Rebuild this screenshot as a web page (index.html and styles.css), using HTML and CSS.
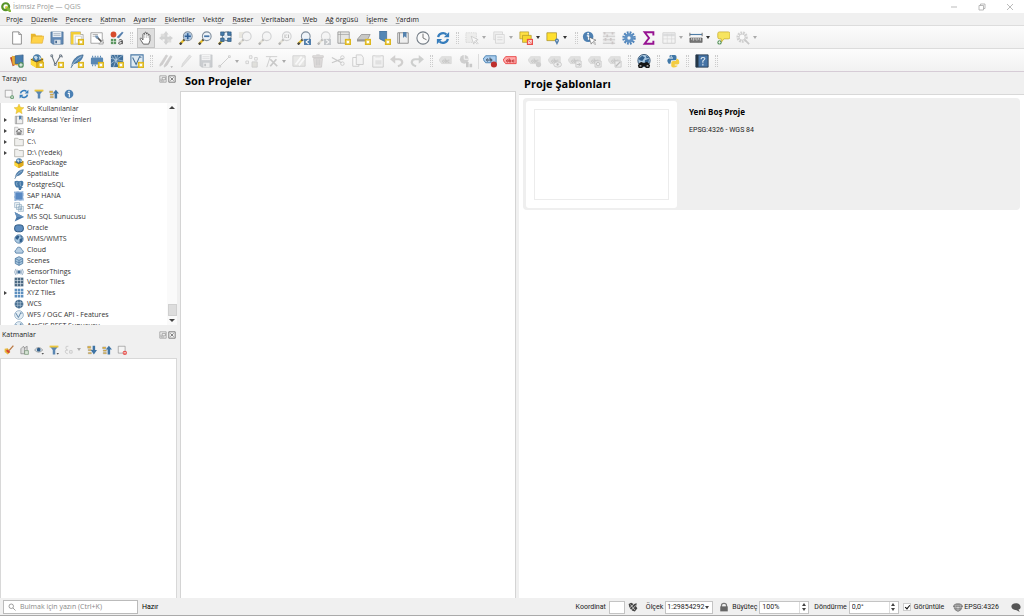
FILE: index.html
```html
<!DOCTYPE html>
<html lang="tr">
<head>
<meta charset="utf-8">
<title>İsimsiz Proje — QGIS</title>
<link rel="stylesheet" href="styles.css">
</head>
<body>
<svg class="sprite" aria-hidden="true">
  <symbol id="new" viewBox="0 0 16 16"><path d="M9 9h7v7H9z" fill="#dcb51c"/><path d="M12.500 10v5M10 12.500h5M10.800 10.800l3.400 3.400M14.200 10.800l-3.400 3.400" stroke="#fff6b8" stroke-width=".9"/><circle cx="12.500" cy="12.500" r="1.400" fill="#fff"/></symbol>
  <symbol id="lens" viewBox="0 0 16 16"><path d="M1 15l5-5" stroke="#e5bd2c" stroke-width="2.600"/><path d="M1 15.500l2-2M5 11l2-2" stroke="#444" stroke-width="2.400"/><circle cx="10" cy="6" r="5" fill="#eef3f8" stroke="#7d8c9b" stroke-width="1.200"/></symbol>
  <symbol id="tag" viewBox="0 0 16 16"><path d="M0 7l3-4h11v8H3z" fill="#b9b9ae" stroke="#8d8d85" stroke-width=".7"/><path d="M4 8.500c0-2 2-2 2 0s-2 1-2 0M7 5v4.500h1.500V7H7M12 7h-2v2.500h2" fill="none" stroke="#555" stroke-width=".8"/></symbol>
  <symbol id="page" viewBox="0 0 16 16"><path d="M3 1h7l3 3v11H3z" fill="#fff" stroke="#777" stroke-width=".9"/><path d="M10 1v3h3" fill="#ddd" stroke="#777" stroke-width=".8"/></symbol>
  <symbol id="folder-open" viewBox="0 0 16 16"><path d="M1 13V3h5l1 2h7v2" fill="#e8b62d"/><path d="M1 14L3 6h13l-2 8z" fill="#ffd34a" stroke="#dca72a" stroke-width=".6"/></symbol>
  <symbol id="save" viewBox="0 0 16 16"><path d="M1 1h14v14H3l-2-2z" fill="#6289b5" stroke="#45698e" stroke-width=".7"/><path d="M3 1h10v6H3z" fill="#e9eff5"/><path d="M4 3h8M4 5h8" stroke="#8899a9" stroke-width=".7"/><path d="M5 10h7v5H5z" fill="#dae2e9"/><path d="M6 11h2v3H6z" fill="#4b6c91"/></symbol>
  <symbol id="layout" viewBox="0 0 16 16"><path d="M1 1h11v3h3v11H1z" fill="#f8f8f5" stroke="#8c8c82" stroke-width=".7"/><path d="M1 1h3v14H1zM4 1h8v3H4z" fill="#f2cd36"/><path d="M6 6h7v8H6z" fill="#fff" stroke="#aaa" stroke-width=".6"/><use href="#new"/></symbol>
  <symbol id="layouts" viewBox="0 0 16 16"><path d="M1 2h13v12H1z" fill="#fff" stroke="#888" stroke-width=".8"/><path d="M3 4h6M3 6h4" stroke="#aaa"/><path d="M8 7l7 7" stroke="#555" stroke-width="2"/><path d="M6 5l3 0 1 3-2 1-2-2z" fill="#7796b5"/><path d="M15 10v5h-5z" fill="#ddd" stroke="#888" stroke-width=".6"/></symbol>
  <symbol id="style" viewBox="0 0 16 16"><circle cx="4" cy="4" r="3.300" fill="#d64c2c"/><path d="M8 7l6-6 1 1-5 6z" fill="#4d79aa" stroke="#4d79aa" stroke-width=".6"/><path d="M1 9h6v6H1z" fill="#5b9560"/><path d="M1 12h6M4 9v6" stroke="#e7f0e7" stroke-width=".7"/><path d="M10 11c1-2 4-1 4 0v4M14 12c-5 0-5 3-3 3 2 0 3-1 3-2" stroke="#444" stroke-width="1.100" fill="none"/></symbol>
  <symbol id="hand" viewBox="0 0 16 16"><path d="M5 15L1.500 9.500C.8 8 2.500 7.500 3.500 9l1 1.200V4c0-1.500 2-1.500 2 0v-1.500c0-1.500 2-1.500 2 0V3.500c0-1.500 2-1.500 2 0V5c0-1.500 2-1.200 2 0v6l-1.500 4z" fill="#fff" stroke="#444" stroke-width=".9" stroke-linejoin="round"/><path d="M6.500 4v4M8.500 3.500V8M10.500 4.500V8" stroke="#999" stroke-width=".6"/></symbol>
  <symbol id="pan" viewBox="0 0 16 16"><path d="M2 3h6v6H2zM8 8h6v5H8z" fill="#b5b5a8"/><path d="M8 0l3 4H9.500v2.500H12V5l4 3-4 3V9.500H9.500V12H11l-3 4-3-4h1.500V9.500H4V11L0 8l4-3v1.500h2.500V4H5z" fill="#8d9499"/></symbol>
  <symbol id="zoom-in" viewBox="0 0 16 16"><use href="#lens"/><circle cx="10" cy="6" r="4.300" fill="#a9c4e0"/><path d="M10 2.500v7M6.500 6h7" stroke="#2f5f96" stroke-width="1.800"/></symbol>
  <symbol id="zoom-out" viewBox="0 0 16 16"><use href="#lens"/><path d="M7 6h6" stroke="#4776a9" stroke-width="2"/></symbol>
  <symbol id="zoom-full" viewBox="0 0 16 16"><use href="#lens"/><path d="M3 1h4v4H3zM11 1h4v4h-4zM3 8h4v4H3zM11 8h4v4h-4z" fill="#477cab" stroke="#244f77" stroke-width=".7"/><circle cx="9" cy="6.500" r="2" fill="#dce7f1"/></symbol>
  <symbol id="zoom-sel" viewBox="0 0 16 16"><path d="M1 1h8v7H1z" fill="#e3cc63"/><use href="#lens"/></symbol>
  <symbol id="zoom-native" viewBox="0 0 16 16"><use href="#lens"/><path d="M8 4v4M12 4v4M10 4v1M10 7v1" stroke="#333"/></symbol>
  <symbol id="zoom-last" viewBox="0 0 16 16"><use href="#lens"/><path d="M8 9h8v7H8z" fill="#527fac"/><path d="M13.500 10l-3 2.500 3 2.500" fill="none" stroke="#fff" stroke-width="1.300"/></symbol>
  <symbol id="zoom-next" viewBox="0 0 16 16"><use href="#lens"/><path d="M8 9h8v7H8z" fill="#527fac"/><path d="M10.500 10l3 2.500-3 2.500" fill="none" stroke="#fff" stroke-width="1.300"/></symbol>
  <symbol id="map-new" viewBox="0 0 16 16"><path d="M1 1h13v13H1z" fill="#e5e5e3" stroke="#888" stroke-width=".8"/><path d="M4 1v13M1 4h13" stroke="#999" stroke-width=".7"/><use href="#new"/></symbol>
  <symbol id="map3d" viewBox="0 0 16 16"><path d="M0 10l5-6h10l-3 6z" fill="#c8c8c6" stroke="#888" stroke-width=".8"/><path d="M0 10v2h11v-2" fill="#999"/><use href="#new"/></symbol>
  <symbol id="mark-new" viewBox="0 0 16 16"><path d="M3 0h8v13l-4-2-4-2z" fill="#5487b5" stroke="#385f88" stroke-width=".7"/><use href="#new"/></symbol>
  <symbol id="marks" viewBox="0 0 16 16"><path d="M2 2h12v12H2z" fill="#eee" stroke="#888"/><path d="M4 2v12" stroke="#888"/><path d="M8 1h4v7l-2-2-2 2z" fill="#5482ae"/></symbol>
  <symbol id="clock" viewBox="0 0 16 16"><circle cx="8" cy="8" r="7" fill="#fafafa" stroke="#727b84" stroke-width="1.200"/><path d="M8 3v5l4 2" fill="none" stroke="#666"/></symbol>
  <symbol id="refresh" viewBox="0 0 16 16"><path d="M2.500 7C3 2.500 9 1 12 4M13.500 9C13 13.500 7 15 4 12" stroke="#367dbc" stroke-width="2.500" fill="none"/><path d="M15 1v6H9zM1 15V9h6z" fill="#367dbc"/></symbol>
  <symbol id="select" viewBox="0 0 16 16"><path d="M1 2h12v11H1z" fill="#ddddcf" stroke="#888" stroke-dasharray="1 1"/><path d="M7 6l8 4-3 1 3 3-1 1-3-3-1 3z" fill="#fff" stroke="#555" stroke-width=".7"/></symbol>
  <symbol id="forms" viewBox="0 0 16 16"><path d="M2 1h10v9H2z" fill="#ddd" stroke="#888" stroke-width=".8"/><path d="M4 4h10v10H4z" fill="#eee" stroke="#888" stroke-width=".8"/><path d="M6 7h6M6 10h6" stroke="#999"/></symbol>
  <symbol id="deselect" viewBox="0 0 16 16"><path d="M1 1h10v8H1z" fill="#ffe044" stroke="#a58d22" stroke-width=".7"/><path d="M4 5h10v8H4z" fill="#f8d72e" stroke="#a58d22" stroke-width=".7"/><path d="M9 9h7v7H9z" fill="#e94f4b"/><path d="M10.500 14.500l4-4M11 11h3v3h-3z" stroke="#fff" stroke-width=".9" fill="none"/></symbol>
  <symbol id="selloc" viewBox="0 0 16 16"><path d="M1 2h11v9H1z" fill="#ffe02f" stroke="#a58d22" stroke-width=".8"/><path d="M12.500 16l-2-4a2.300 2.300 0 1 1 4 0z" fill="#517eac"/><circle cx="12.500" cy="11" r=".8" fill="#fff"/></symbol>
  <symbol id="identify" viewBox="0 0 16 16"><circle cx="7" cy="6.500" r="6" fill="#4d80b2"/><circle cx="7" cy="3" r="1.100" fill="#fff"/><path d="M5.500 5.500H7.500V10" stroke="#fff" stroke-width="1.500" fill="none"/><path d="M8 7l8 3.500-3 1 3 3-1 1-3-3-1.500 2.500z" fill="#fff" stroke="#555" stroke-width=".6"/></symbol>
  <symbol id="calc" viewBox="0 0 16 16"><path d="M1 2h14v13H1z" fill="#ddd"/><path d="M1 2h14M1 6h14M1 10h14M1 14h14" stroke="#777" stroke-width="1"/><path d="M3 1v3M6 4v3M10 8v3M12 1v3M4 8v3M12 12v3" stroke="#b46464" stroke-width="2"/></symbol>
  <symbol id="gear" viewBox="0 0 16 16"><circle cx="8" cy="8" r="6.200" fill="none" stroke="#4f83b9" stroke-width="3" stroke-dasharray="2 1.246"/><circle cx="8" cy="8" r="3.700" fill="none" stroke="#5f91c4" stroke-width="3.600"/></symbol>
  <symbol id="sigma" viewBox="0 0 16 16"><path d="M13 5V1.500H3L8 8l-5 6.500h10V11" fill="none" stroke="#961291" stroke-width="2.200"/></symbol>
  <symbol id="table" viewBox="0 0 16 16"><path d="M1 2h14v12H1z" fill="#f3f3f3" stroke="#888"/><path d="M1 3h14v3H1z" fill="#9fb0bf"/><path d="M1 9h14M6 3v11M11 3v11" stroke="#999" stroke-width=".7"/></symbol>
  <symbol id="ruler" viewBox="0 0 16 16"><path d="M1 4h14" stroke="#4e7da7" stroke-width="1.300"/><path d="M1 2v4M15 2v4" stroke="#666"/><path d="M1 8h14v5H1z" fill="#777" stroke="#555" stroke-width=".7"/><path d="M3 8v2M5 8v3M7 8v2M9 8v3M11 8v2M13 8v3" stroke="#fff" stroke-width=".7"/></symbol>
  <symbol id="tip" viewBox="0 0 16 16"><path d="M4 1h10q2 0 2 2v4q0 2-2 2H9l-3 4V9H4Q2 9 2 7V3q0-2 2-2" fill="#f7e45f" stroke="#c4a92d" stroke-width=".8"/><circle cx="4" cy="13" r="2.500" fill="#5c9660"/><path d="M4 11.500v3M2.500 13h3" stroke="#fff" stroke-width=".8"/></symbol>
  <symbol id="search-gear" viewBox="0 0 16 16"><circle cx="7" cy="7" r="5" fill="none" stroke="#888" stroke-width="3" stroke-dasharray="2 1"/><circle cx="7" cy="7" r="3.500" fill="#fff" stroke="#777"/><path d="M10 10l5 5" stroke="#777" stroke-width="2"/></symbol>
  <symbol id="sources" viewBox="0 0 16 16"><path d="M0 4l7-2 2 9-6 3z" fill="#bc4e31"/><path d="M2 2l7 1 0 10-6-1z" fill="#e8ad36"/><path d="M6 2l9-1v10H6z" fill="#477caf" stroke="#315a83" stroke-width=".7"/><circle cx="12.500" cy="12.500" r="3.300" fill="#549064"/><path d="M12.500 10.500v4M10.500 12.500h4" stroke="#fff" stroke-width="1.100"/></symbol>
  <symbol id="gpkg" viewBox="0 0 16 16"><path d="M1 6l7-4 7 3v7l-7 4-7-4z" fill="#e0ac1d"/><circle cx="8" cy="5" r="4.800" fill="#467ba8"/><path d="M4 3l3-1 2 2-2 3zM10 2l3 3-2 2z" fill="#c7dce9"/><path d="M1 6l6 3v7l-6-4z" fill="#ffda3b"/><path d="M7 9l8-3v6l-7 4H7z" fill="#e0ac1d"/><path d="M1 6l6 3 8-3" fill="none" stroke="#594a24" stroke-width=".9"/></symbol>
  <symbol id="gpkg-new" viewBox="0 0 16 16"><use href="#gpkg"/><use href="#new"/></symbol>
  <symbol id="shp-new" viewBox="0 0 16 16"><path d="M2 2l4 10L12 2q2-1 2 2" fill="none" stroke="#6d7780" stroke-width="1.200"/><path d="M1 1h2v2H1zM5 11h2v2H5zM11 1h2v2h-2z" fill="#fff" stroke="#456" stroke-width=".8"/><use href="#new"/></symbol>
  <symbol id="feather" viewBox="0 0 16 16"><path d="M2 13C4 5 8 2 15 1c-1 5-4 9-11 10l-3 5" fill="#5686b4" stroke="#345e87" stroke-width=".8"/><path d="M2 13C6 8 9 5 13 3" stroke="#d4e3ee" stroke-width=".7" fill="none"/></symbol>
  <symbol id="feather-new" viewBox="0 0 16 16"><use href="#feather"/><use href="#new"/></symbol>
  <symbol id="scratch" viewBox="0 0 16 16"><rect x="1" y="4" width="14" height="8" rx="1.500" fill="#5887b4"/><path d="M3 2v2M6 2v2M9 2v2M12 2v2M3 12v2M6 12v2" stroke="#5887b4" stroke-width="1.200"/><use href="#new"/></symbol>
  <symbol id="mesh-new" viewBox="0 0 16 16"><path d="M1 1h14v14H1z" fill="#416f9a"/><path d="M1 5l14 3M1 11L15 1M5 1l5 13M1 1l10 13M9 1L4 15" stroke="#c5dbea" stroke-width=".7"/><use href="#new"/></symbol>
  <symbol id="virt-new" viewBox="0 0 16 16"><path d="M1 1h14v14H1z" fill="#dfeaf2" stroke="#4978a5" stroke-width="1.200"/><path d="M3 4l4 8 4-9 2 1" fill="none" stroke="#426d96" stroke-width="1.200"/><use href="#new"/></symbol>
  <symbol id="pencil" viewBox="0 0 16 16"><path d="M3 15l1-4L12 1l2 2L6 12z" fill="#bbb" stroke="#888" stroke-width=".7"/></symbol>
  <symbol id="pencils" viewBox="0 0 16 16"><path d="M1 12L8 1l2 1-6 10-3 2zM6 13l7-11 2 1-6 10-3 2z" fill="#a08080" stroke="#777" stroke-width=".7"/><path d="M13 14h3l-1.500 2z" fill="#333"/></symbol>
  <symbol id="line" viewBox="0 0 16 16"><path d="M2 14L13 3" stroke="#777"/><path d="M1 13h2v2H1zM12 2h2v2h-2z" fill="#fff" stroke="#777"/></symbol>
  <symbol id="points" viewBox="0 0 16 16"><path d="M1 8h3v3H1zM5 2h3v3H5zM11 4h3v3h-3z" fill="#eee" stroke="#888"/><path d="M8 9h6v6H8z" fill="#c5bd7d" stroke="#888"/></symbol>
  <symbol id="vertex" viewBox="0 0 16 16"><path d="M1 3h13M6 3L2 15" stroke="#777" fill="none"/><path d="M6 6l8 8M13 6l-7 8" stroke="#777" stroke-width="2"/></symbol>
  <symbol id="attrs" viewBox="0 0 16 16"><path d="M1 2h14v12H1z" fill="#cfcfbd" stroke="#888"/><path d="M4 12l7-9M8 13l6-8" stroke="#fff" stroke-width="2"/></symbol>
  <symbol id="trash" viewBox="0 0 16 16"><path d="M3 5h10l-1 10H4zM2 2h12v2H2zM6 1h4" fill="#d4a9a4" stroke="#997571"/><path d="M6 6v7M8 6v7M10 6v7" stroke="#777"/></symbol>
  <symbol id="cut" viewBox="0 0 16 16"><path d="M1 4l11 6M1 10l13-5" stroke="#777" stroke-width="1.500"/><circle cx="13" cy="4" r="2" fill="none" stroke="#777"/><circle cx="13" cy="11" r="2" fill="none" stroke="#777"/></symbol>
  <symbol id="copy" viewBox="0 0 16 16"><path d="M2 4h7v10H2z" fill="#fff" stroke="#777"/><path d="M6 1h6l2 3v8H6z" fill="#eee" stroke="#777"/></symbol>
  <symbol id="paste" viewBox="0 0 16 16"><path d="M2 2h12v13H2z" fill="#eee" stroke="#777"/><path d="M5 1h6v3H5zM5 7h7v5H5z" fill="#bbb"/></symbol>
  <symbol id="undo" viewBox="0 0 16 16"><path d="M5 6h5q4 0 4 4-1 3-5 4" fill="none" stroke="#99877d" stroke-width="2.500"/><path d="M6 1v10L0 6z" fill="#99877d"/></symbol>
  <symbol id="redo" viewBox="0 0 16 16"><path d="M11 6H6Q2 6 2 10q1 3 5 4" fill="none" stroke="#7c8c80" stroke-width="2.500"/><path d="M10 1v10l6-5z" fill="#7c8c80"/></symbol>
  <symbol id="diagram" viewBox="0 0 16 16"><circle cx="6" cy="6" r="5" fill="#888"/><path d="M6 1v5h5" stroke="#fff" fill="none"/><path d="M8 9h3v6H8zM12 11h3v4h-3z" fill="#777"/></symbol>
  <symbol id="label-blue" viewBox="0 0 16 16"><path d="M0 6l3-4h12v8H3z" fill="#aacdee" stroke="#427dae"/><path d="M4 7c0-2 2-2 2 0s-2 1-2 0M8 4v4h2V6H8" fill="none" stroke="#345"/><circle cx="12.500" cy="12" r="3.500" fill="#bd2f2d"/></symbol>
  <symbol id="label-red" viewBox="0 0 16 16"><path d="M0 7l3-4h12v8H3z" fill="#ffaaaa" stroke="#e83f3f"/><path d="M4 8c0-2 2-2 2 0s-2 1-2 0M7 5v4h2V7H7M13 7h-2v2h2" fill="none" stroke="#b92828"/></symbol>
  <symbol id="tag-pin" viewBox="0 0 16 16"><use href="#tag"/><circle cx="12" cy="12" r="3" fill="#888"/></symbol>
  <symbol id="tag-eye" viewBox="0 0 16 16"><use href="#tag"/><ellipse cx="11" cy="12" rx="4.500" ry="3" fill="#ddd" stroke="#777"/><circle cx="11" cy="12" r="1.300" fill="#555"/></symbol>
  <symbol id="tag-move" viewBox="0 0 16 16"><use href="#tag"/><path d="M9 8h6v7H9z" fill="#ddd" stroke="#777"/><path d="M10 12h4M12 10l2 2-2 2" fill="none" stroke="#555"/></symbol>
  <symbol id="tag-rot" viewBox="0 0 16 16"><use href="#tag"/><path d="M8 8h7v7H8z" fill="#ddd" stroke="#777"/><circle cx="11.500" cy="11.500" r="2" fill="none" stroke="#555"/></symbol>
  <symbol id="tag-edit" viewBox="0 0 16 16"><use href="#tag"/><path d="M8 8h7v7H8z" fill="#ddd" stroke="#777"/><path d="M9 14l5-5" stroke="#555" stroke-width="1.500"/></symbol>
  <symbol id="globe" viewBox="0 0 16 16"><circle cx="8" cy="8" r="6.800" fill="#a9c8e1" stroke="#3f6c96"/><path d="M2 5l4-3 3 2-3 5-3-1zM9 8l5-2-1 6-4 2zM10 2l4 3-3 1z" fill="#315f8c"/></symbol>
  <symbol id="metasearch" viewBox="0 0 16 16"><circle cx="8" cy="7.500" r="7" fill="#a9c8e1" stroke="#2c4c6b"/><path d="M2 5l4-3 3 2-3 4-3-1zM9 7l5-2-1 5-4 1zM10 2l4 2-3 1z" fill="#315f8c"/><path d="M3 10l2-1 2 1h2l2-1 2 1 2 3-1 3h-4l-1-2H7l-1 2H2l-1-3z" fill="#151515"/><path d="M3 13.500h2M11 13.500h2" stroke="#ccc" stroke-width="1.300"/></symbol>
  <symbol id="python" viewBox="0 0 16 16"><path d="M5 1h5q2 0 2 2v3q0 1-2 1H6L5 11H3Q0 7 3 5h5V4H4V2z" fill="#4078a8"/><path d="M12 5q4 1 3 6-1 1-5 1v1h3v1q-5 3-7 0v-4q0-2 2-2h3l1-2z" fill="#f3cc42"/><circle cx="6" cy="2.500" r=".7" fill="#fff"/></symbol>
  <symbol id="help" viewBox="0 0 16 16"><path d="M1 1h14v14H1z" fill="#4674a6" stroke="#273b51"/><path d="M1 1h3v14H1z" fill="#253646"/><path d="M7 6q0-2 2-2 3 0 2 2l-2 2v2M9 11v2" fill="none" stroke="#e4edf4" stroke-width="1.200"/></symbol>
  <symbol id="star" viewBox="0 0 16 16"><path d="M8 0l2.300 5.300 5.700.5-4.300 3.800L13 15.500l-5-3-5 3 1.300-5.900L0 5.800l5.700-.5z" fill="#f7d333" stroke="#d6a929" stroke-width=".6"/></symbol>
  <symbol id="home" viewBox="0 0 16 16"><path d="M1 14V2h5l1 2h8v10z" fill="#efefef" stroke="#aaa"/><path d="M3 9l5-4 5 4M5 8v5h6V8" fill="none" stroke="#555" stroke-width="1.300"/><path d="M7 9h2v4H7z" fill="#666"/></symbol>
  <symbol id="folder" viewBox="0 0 16 16"><path d="M1 14V2h5l2 2h7v10z" fill="#efefed" stroke="#a9a9a4" stroke-width="1.200"/></symbol>
  <symbol id="pg" viewBox="0 0 16 16"><path d="M1 2q4-2 7 0 5-2 7 1 1 4-3 8l3 1-3 1-1 3H8l-1-4-3 0Q0 8 1 2" fill="#4478a7"/><path d="M5 3q-2 3 0 6M10 3q-1 4 1 7" fill="none" stroke="#d3e2ed" stroke-width=".8"/></symbol>
  <symbol id="hana" viewBox="0 0 16 16"><path d="M1 1h14v14H1z" fill="none" stroke="#7ba2cf" stroke-width="2" stroke-dasharray="1 1"/><path d="M2 2h12v12H2z" fill="#5989c3"/></symbol>
  <symbol id="stac" viewBox="0 0 16 16"><path d="M1 1h8v8H1zM4 4h8v8H4zM7 7h8v8H7z" fill="#eef3f6" stroke="#8ba9bf"/><path d="M8 11h5M11 8v6" stroke="#7d9fba"/></symbol>
  <symbol id="mssql" viewBox="0 0 16 16"><path d="M1 0l15 8L1 15l3-7z" fill="#4878a9"/><path d="M1 0l15 8H4z" fill="#6590bb"/></symbol>
  <symbol id="oracle" viewBox="0 0 16 16"><rect x="1" y="3" width="14" height="11" rx="4.500" fill="#5e8dbf" stroke="#2c5781" stroke-width="1.600"/></symbol>
  <symbol id="cloud" viewBox="0 0 16 16"><path d="M3 13q-4-4 1-6 1-5 6-3 2 1 2 3 5 2 2 6z" fill="#b7cee2" stroke="#4975a0" stroke-width="1.200"/></symbol>
  <symbol id="cube" viewBox="0 0 16 16"><path d="M8 1l6 3v8l-6 3-6-3V4z" fill="#a8c6df" stroke="#426f98" stroke-width="1.200"/><path d="M2 4l6 3 6-3M8 7v8M2 8l6 3 6-3" fill="none" stroke="#426f98"/></symbol>
  <symbol id="sensor" viewBox="0 0 16 16"><path d="M5.500 5.500h5v5h-5z" fill="#416e98"/><path d="M3 3Q-1 8 3 13M13 3q4 5 0 10M5 4q-3 4 0 8M11 4q3 4 0 8" fill="none" stroke="#6689a9"/></symbol>
  <symbol id="tiles" viewBox="0 0 16 16"><path d="M1 1h14v14H1z" fill="#496780"/><path d="M5.500 1v14M10.500 1v14M1 5.500h14M1 10.500h14" stroke="#e4ecf2"/></symbol>
  <symbol id="xyz" viewBox="0 0 16 16"><path d="M1 1h4v4H1zM6 1h4v4H6zM11 1h4v4h-4zM1 6h4v4H1zM6 6h4v4H6zM11 6h4v4h-4zM1 11h4v4H1zM6 11h4v4H6zM11 11h4v4h-4z" fill="#5d8fbe"/></symbol>
  <symbol id="wcs" viewBox="0 0 16 16"><circle cx="8" cy="8" r="7" fill="#3c6488"/><path d="M1 6h14M1 10h14M6 2v12M10 2v12" stroke="#bdd1e0" stroke-width="1"/></symbol>
  <symbol id="wfs" viewBox="0 0 16 16"><circle cx="8" cy="8" r="7" fill="#e4eef5" stroke="#7799b6"/><path d="M3 5l4 7 4-8 2 2" fill="none" stroke="#426f98" stroke-width="1.300"/></symbol>
  <symbol id="add-layer" viewBox="0 0 16 16"><path d="M2 2h11v11H2z" fill="#f7f7f7" stroke="#888"/><circle cx="13" cy="13" r="3" fill="#579262"/><path d="M13 11v4M11 13h4" stroke="#fff"/></symbol>
  <symbol id="filter" viewBox="0 0 16 16"><path d="M1 2h14l-5 6v7H6V8z" fill="#5a86b2"/><path d="M1 1h14v3H1z" fill="#ecc63c"/></symbol>
  <symbol id="up" viewBox="0 0 16 16"><path d="M1 3h5v3H1zM2 8h5v2H2zM2 12h5v2H2z" fill="#e9b638" stroke="#777" stroke-width=".5"/><path d="M9 15V7H6l5-6 5 6h-3v8z" fill="#3d73a4"/></symbol>
  <symbol id="down" viewBox="0 0 16 16"><path d="M1 2h5v3H1zM2 7h5v2H2zM2 12h5v2H2z" fill="#e9b638" stroke="#777" stroke-width=".5"/><path d="M9 1v7H6l5 7 5-7h-3V1z" fill="#3d73a4"/></symbol>
  <symbol id="info" viewBox="0 0 16 16"><circle cx="8" cy="8" r="7" fill="#4b80b4"/><circle cx="8" cy="4" r="1.200" fill="#fff"/><path d="M6 7h2.500v6" fill="none" stroke="#fff" stroke-width="1.700"/></symbol>
  <symbol id="brush" viewBox="0 0 16 16"><path d="M1 6l5-1 4 6-4 4-5-4z" fill="#e6b93d"/><path d="M6 7l4 4-3 2-4-4z" fill="#d64534"/><path d="M8 9l7-8" stroke="#ba7841" stroke-width="2"/></symbol>
  <symbol id="group" viewBox="0 0 16 16"><path d="M3 14V6l4-4 2 3v9zM8 5l5-3v7" fill="#ddd" stroke="#777"/><path d="M9 9h6v6H9z" fill="#d8e5d6" stroke="#658865"/></symbol>
  <symbol id="eye" viewBox="0 0 16 16"><path d="M1 8q6-8 13 0-7 7-13 0" fill="#d8e5ed" stroke="#777"/><circle cx="7.500" cy="7.500" r="3" fill="#335e88"/><path d="M12 13h4l-2 2z" fill="#222"/></symbol>
  <symbol id="filter-menu" viewBox="0 0 16 16"><use href="#filter"/><path d="M12 13h4l-2 2z" fill="#222"/></symbol>
  <symbol id="expr" viewBox="0 0 16 16"><path d="M7 2Q2 1 3 5t3 3q-5 0-4 3t4 3M9 9h4v4H9z" fill="none" stroke="#777" stroke-width="1.300"/></symbol>
  <symbol id="remove" viewBox="0 0 16 16"><path d="M2 2h11v11H2z" fill="#f4f4f4" stroke="#888"/><circle cx="12.500" cy="12.500" r="3.500" fill="#e65450"/><path d="M10.500 12.500h4" stroke="#fff" stroke-width="1.300"/></symbol>
  <symbol id="float" viewBox="0 0 10 10"><path d="M1 1h8v8H1zM4 3h4v3H4zM2.500 4.500v3h4" fill="none" stroke="#888" stroke-width=".8"/></symbol>
  <symbol id="shut" viewBox="0 0 10 10"><path d="M1 1h8v8H1zM3 3l4 4M7 3L3 7" fill="none" stroke="#666"/></symbol>
  <symbol id="extent" viewBox="0 0 16 16"><path d="M1 3l4-2 4 2 5-1-1 5 2 3-4 5-4-1-3-3-2-3z" fill="#444"/><path d="M2 10l9-8M4 14l9-9M4 4l7 9" stroke="#eee" stroke-width="1.100"/></symbol>
  <symbol id="lock" viewBox="0 0 16 16"><path d="M4 8V5q0-3 4-3t4 3v3" fill="none" stroke="#777" stroke-width="2"/><path d="M2 7h12v8H2z" fill="#666"/></symbol>
  <symbol id="crs" viewBox="0 0 16 16"><path d="M0 8q1-6 8-6t8 6l-3 1-5-1-5 1z" fill="#777"/><path d="M2 10h12l-2 3-4 2-4-2z" fill="#999" stroke="#666"/><path d="M5 3l-1 6M8 2v12M11 3l1 6M2 6h12" stroke="#ddd" stroke-width=".7"/></symbol>
  <symbol id="bubble" viewBox="0 0 16 16"><path d="M8 2c9 0 9 10 4 10l2 4-5-3C-2 13-2 2 8 2" fill="#555"/></symbol>
  <symbol id="magnify" viewBox="0 0 16 16"><circle cx="6.500" cy="6.500" r="4.500" fill="none" stroke="#777" stroke-width="1.400"/><path d="M10 10l5 5" stroke="#777" stroke-width="1.400"/></symbol>
  <symbol id="qgis" viewBox="0 0 16 16"><circle cx="7.500" cy="7.500" r="5.500" fill="none" stroke="#579328" stroke-width="3.500"/><path d="M7 7h4l5 6v3h-3L7 10z" fill="#86b83d"/><path d="M7 7h4l-4 4z" fill="#efc72d"/></symbol>
</svg>

<div class="window">
  <header class="titlebar">
    <svg class="ico-s"><use href="#qgis"/></svg>
    <span class="title">İsimsiz Proje — QGIS</span>
    <div class="win-buttons">
      <button aria-label="Simge durumuna küçült"><svg viewBox="0 0 8 8"><path d="M1 4h6"/></svg></button>
      <button aria-label="Önceki boyut"><svg viewBox="0 0 8 8"><path d="M1 2.500h4.500V7H1zM2.500 2.500V1H7v4.500H5.500"/></svg></button>
      <button aria-label="Kapat"><svg viewBox="0 0 8 8"><path d="M1 1l6 6M7 1L1 7"/></svg></button>
    </div>
  </header>

  <nav class="menubar">
    <button>Pro<u>j</u>e</button><button><u>D</u>üzenle</button><button><u>P</u>encere</button><button><u>K</u>atman</button><button><u>A</u>yarlar</button><button><u>E</u>klentiler</button><button>Vekt<u>ö</u>r</button><button><u>R</u>aster</button><button><u>V</u>eritabanı</button><button><u>W</u>eb</button><button><u>A</u>ğ örgüsü</button><button>İş<u>l</u>eme</button><button><u>Y</u>ardım</button>
  </nav>

  <div class="toolbar">
    <div class="tools">
      <button aria-label="Yeni"><svg><use href="#page"/></svg></button>
      <button aria-label="Aç"><svg><use href="#folder-open"/></svg></button>
      <button aria-label="Kaydet"><svg><use href="#save"/></svg></button>
      <button aria-label="Yeni çıktı düzeni"><svg><use href="#layout"/></svg></button>
      <button aria-label="Düzen yöneticisi"><svg><use href="#layouts"/></svg></button>
      <button aria-label="Stil yöneticisi"><svg><use href="#style"/></svg></button>
    </div>
    <i class="grip"></i>
    <div class="tools nav-tools">
      <button class="active" aria-label="Kaydır"><svg><use href="#hand"/></svg></button>
      <button disabled aria-label="Seçime kaydır"><svg><use href="#pan"/></svg></button>
      <button aria-label="Yakınlaş"><svg><use href="#zoom-in"/></svg></button>
      <button aria-label="Uzaklaş"><svg><use href="#zoom-out"/></svg></button>
      <button aria-label="Tümünü göster"><svg><use href="#zoom-full"/></svg></button>
      <button disabled aria-label="Seçime yakınlaş"><svg><use href="#zoom-sel"/></svg></button>
      <button disabled aria-label="Katmana yakınlaş"><svg><use href="#lens"/></svg></button>
      <button disabled aria-label="Doğal çözünürlük"><svg><use href="#zoom-native"/></svg></button>
      <button aria-label="Önceki görünüm"><svg><use href="#zoom-last"/></svg></button>
      <button disabled aria-label="Sonraki görünüm"><svg><use href="#zoom-next"/></svg></button>
      <button aria-label="Yeni harita"><svg><use href="#map-new"/></svg></button>
      <button aria-label="Yeni 3B harita"><svg><use href="#map3d"/></svg></button>
      <button aria-label="Yeni yer imi"><svg><use href="#mark-new"/></svg></button>
      <button aria-label="Yer imleri"><svg><use href="#marks"/></svg></button>
      <button aria-label="Zaman denetimi"><svg><use href="#clock"/></svg></button>
      <button aria-label="Yenile"><svg><use href="#refresh"/></svg></button>
    </div>
    <i class="grip"></i>
    <div class="tools wide">
      <button class="drop" disabled aria-label="Detay seç"><svg><use href="#select"/></svg></button>
      <button class="drop" disabled aria-label="Değere göre seç"><svg><use href="#forms"/></svg></button>
      <button class="drop" aria-label="Seçimi kaldır"><svg><use href="#deselect"/></svg></button>
      <button class="drop" aria-label="Konuma göre seç"><svg><use href="#selloc"/></svg></button>
    </div>
    <i class="grip"></i>
    <div class="tools info-tools">
      <button aria-label="Bilgi al"><svg><use href="#identify"/></svg></button>
      <button disabled aria-label="Alan hesaplayıcı"><svg><use href="#calc"/></svg></button>
      <button aria-label="İşleme araçları"><svg><use href="#gear"/></svg></button>
      <button aria-label="İstatistik"><svg><use href="#sigma"/></svg></button>
      <button class="drop" disabled aria-label="Öznitelik tablosu"><svg><use href="#table"/></svg></button>
      <button class="drop" aria-label="Ölç"><svg><use href="#ruler"/></svg></button>
      <button aria-label="Harita ipuçları"><svg><use href="#tip"/></svg></button>
      <button class="drop" disabled aria-label="Eylem çalıştır"><svg><use href="#search-gear"/></svg></button>
    </div>
  </div>

  <div class="toolbar">
    <div class="tools">
      <button aria-label="Veri kaynağı yöneticisi"><svg><use href="#sources"/></svg></button>
      <button aria-label="Yeni GeoPackage"><svg><use href="#gpkg-new"/></svg></button>
      <button aria-label="Yeni Shapefile"><svg><use href="#shp-new"/></svg></button>
      <button aria-label="Yeni SpatiaLite"><svg><use href="#feather-new"/></svg></button>
      <button aria-label="Geçici katman"><svg><use href="#scratch"/></svg></button>
      <button aria-label="Yeni ağ örgüsü"><svg><use href="#mesh-new"/></svg></button>
      <button aria-label="Sanal katman"><svg><use href="#virt-new"/></svg></button>
    </div>
    <i class="grip"></i>
    <div class="tools edit-tools">
      <button disabled aria-label="Düzenlemeler"><svg><use href="#pencils"/></svg></button>
      <button disabled aria-label="Düzenle"><svg><use href="#pencil"/></svg></button>
      <button disabled aria-label="Katmanı kaydet"><svg><use href="#save"/></svg></button>
      <button class="drop" disabled aria-label="Sayısallaştır"><svg><use href="#line"/></svg></button>
      <button disabled aria-label="Nokta ekle"><svg><use href="#points"/></svg></button>
      <button class="drop" disabled aria-label="Köşe aracı"><svg><use href="#vertex"/></svg></button>
      <button disabled aria-label="Öznitelikleri değiştir"><svg><use href="#attrs"/></svg></button>
      <button disabled aria-label="Sil"><svg><use href="#trash"/></svg></button>
      <button disabled aria-label="Kes"><svg><use href="#cut"/></svg></button>
      <button disabled aria-label="Kopyala"><svg><use href="#copy"/></svg></button>
      <button disabled aria-label="Yapıştır"><svg><use href="#paste"/></svg></button>
      <button disabled aria-label="Geri al"><svg><use href="#undo"/></svg></button>
      <button disabled aria-label="Yinele"><svg><use href="#redo"/></svg></button>
    </div>
    <i class="grip"></i>
    <div class="tools">
      <button disabled aria-label="Etiketleme"><svg><use href="#tag"/></svg></button>
      <button disabled aria-label="Diyagram"><svg><use href="#diagram"/></svg></button>
    </div>
    <i class="rule"></i>
    <div class="tools">
      <button aria-label="Sabit etiketleri vurgula"><svg><use href="#label-blue"/></svg></button>
      <button aria-label="Yerleşmemiş etiketler"><svg><use href="#label-red"/></svg></button>
    </div>
    <div class="tools label-tools">
      <button disabled aria-label="Etiketi sabitle"><svg><use href="#tag-pin"/></svg></button>
      <button disabled aria-label="Etiketi göster"><svg><use href="#tag-eye"/></svg></button>
      <button disabled aria-label="Etiketi taşı"><svg><use href="#tag-move"/></svg></button>
      <button disabled aria-label="Etiketi döndür"><svg><use href="#tag-rot"/></svg></button>
      <button disabled aria-label="Etiketi değiştir"><svg><use href="#tag-edit"/></svg></button>
    </div>
    <i class="grip"></i>
    <div class="tools"><button aria-label="MetaSearch"><svg><use href="#metasearch"/></svg></button></div>
    <i class="grip"></i>
    <div class="tools"><button aria-label="Python konsolu"><svg><use href="#python"/></svg></button></div>
    <i class="grip"></i>
    <div class="tools"><button aria-label="Yardım"><svg><use href="#help"/></svg></button></div>
    <i class="grip"></i>
  </div>

  <main class="workspace">
    <aside class="docks">
      <section class="dock browser">
        <div class="dock-title"><h2>Tarayıcı</h2><button aria-label="Ayır"><svg><use href="#float"/></svg></button><button aria-label="Kapat"><svg><use href="#shut"/></svg></button></div>
        <div class="dock-tools">
          <button aria-label="Katman ekle"><svg><use href="#add-layer"/></svg></button>
          <button aria-label="Yenile"><svg><use href="#refresh"/></svg></button>
          <button aria-label="Süz"><svg><use href="#filter"/></svg></button>
          <button aria-label="Tümünü daralt"><svg><use href="#up"/></svg></button>
          <button aria-label="Özellikler"><svg><use href="#info"/></svg></button>
        </div>
        <div class="tree-box">
          <ul class="tree">
            <li><svg><use href="#star"/></svg>Sık Kullanılanlar</li>
            <li class="branch"><svg><use href="#marks"/></svg>Mekansal Yer İmleri</li>
            <li class="branch"><svg><use href="#home"/></svg>Ev</li>
            <li class="branch"><svg><use href="#folder"/></svg>C:\</li>
            <li class="branch"><svg><use href="#folder"/></svg>D:\ (Yedek)</li>
            <li><svg><use href="#gpkg"/></svg>GeoPackage</li>
            <li><svg><use href="#feather"/></svg>SpatiaLite</li>
            <li><svg><use href="#pg"/></svg>PostgreSQL</li>
            <li><svg><use href="#hana"/></svg>SAP HANA</li>
            <li><svg><use href="#stac"/></svg>STAC</li>
            <li><svg><use href="#mssql"/></svg>MS SQL Sunucusu</li>
            <li><svg><use href="#oracle"/></svg>Oracle</li>
            <li><svg><use href="#globe"/></svg>WMS/WMTS</li>
            <li><svg><use href="#cloud"/></svg>Cloud</li>
            <li><svg><use href="#cube"/></svg>Scenes</li>
            <li><svg><use href="#sensor"/></svg>SensorThings</li>
            <li><svg><use href="#tiles"/></svg>Vector Tiles</li>
            <li class="branch"><svg><use href="#xyz"/></svg>XYZ Tiles</li>
            <li><svg><use href="#wcs"/></svg>WCS</li>
            <li><svg><use href="#wfs"/></svg>WFS / OGC API - Features</li>
            <li><svg><use href="#wfs"/></svg>ArcGIS REST Sunucusu</li>
          </ul>
          <div class="scroll"><button class="arrow-up" aria-label="Yukarı"></button><span class="thumb"></span><button class="arrow-down" aria-label="Aşağı"></button></div>
        </div>
      </section>
      <section class="dock layers">
        <div class="dock-title"><h2>Katmanlar</h2><button aria-label="Ayır"><svg><use href="#float"/></svg></button><button aria-label="Kapat"><svg><use href="#shut"/></svg></button></div>
        <div class="dock-tools">
          <button aria-label="Biçem"><svg><use href="#brush"/></svg></button>
          <button aria-label="Grup ekle"><svg><use href="#group"/></svg></button>
          <button aria-label="Temalar"><svg><use href="#eye"/></svg></button>
          <button aria-label="Süz"><svg><use href="#filter-menu"/></svg></button>
          <button class="drop" disabled aria-label="İfadeyle süz"><svg><use href="#expr"/></svg></button>
          <button aria-label="Tümünü genişlet"><svg><use href="#down"/></svg></button>
          <button aria-label="Tümünü daralt"><svg><use href="#up"/></svg></button>
          <button aria-label="Kaldır"><svg><use href="#remove"/></svg></button>
        </div>
        <div class="layer-list"></div>
      </section>
    </aside>
    <section class="recent"><h1>Son Projeler</h1><div class="recent-list"></div></section>
    <section class="templates">
      <h1>Proje Şablonları</h1>
      <div class="template-list">
        <article class="card">
          <div class="preview"><div class="sheet"></div></div>
          <div class="card-text"><h3>Yeni Boş Proje</h3><p>EPSG:4326 - WGS 84</p></div>
        </article>
      </div>
    </section>
  </main>

  <footer class="status">
    <label class="locator"><svg><use href="#magnify"/></svg><input type="text" placeholder="Bulmak için yazın (Ctrl+K)" aria-label="Bul"></label>
    <span class="ready">Hazır</span>
    <label for="coord">Koordinat</label><input id="coord" class="field coord" type="text">
    <svg class="ico-s extent"><use href="#extent"/></svg>
    <label for="scale">Ölçek</label>
    <span class="combo"><select id="scale" class="field"><option>1:29854292</option></select></span>
    <svg class="ico-s lock"><use href="#lock"/></svg>
    <label for="mag">Büyüteç</label>
    <span class="spin field"><input id="mag" type="text" value="100%"><span class="steps"><button aria-label="Büyüteci artır"></button><button aria-label="Büyüteci azalt"></button></span></span>
    <label class="rot" for="rot">Döndürme</label>
    <span class="spin field"><input id="rot" type="text" value="0,0°"><span class="steps"><button aria-label="Açıyı artır"></button><button aria-label="Açıyı azalt"></button></span></span>
    <label class="render"><input type="checkbox" checked>Görüntüle</label>
    <button class="crs"><svg class="ico-s"><use href="#crs"/></svg>EPSG:4326</button>
    <button class="messages" aria-label="İletiler"><svg class="ico-s"><use href="#bubble"/></svg></button>
  </footer>
</div>
</body>
</html>
```

FILE: styles.css
```css
* { box-sizing: border-box; }
body { margin: 0; font: 7px/10px "Open Sans", "Noto Sans", sans-serif; color: #222; background: #f0f0f0; }
h1, h2, h3, p, ul { margin: 0; padding: 0; }
button { margin: 0; padding: 0; border: 0; background: none; font: inherit; color: inherit; }
input, select { margin: 0; font: inherit; color: inherit; }
svg { display: block; flex: none; }
.sprite { position: absolute; width: 0; height: 0; }
.ico-s { width: 10px; height: 10px; }

.window { display: flex; flex-direction: column; height: 100vh; overflow: hidden; }
.titlebar { display: flex; align-items: center; flex: none; height: 13px; padding: 1px 0 0 1px; background: #fff; color: #999; }
.title { margin-left: 2px; }
.win-buttons { display: flex; gap: 20px; margin-left: auto; padding-right: 10px; }
.win-buttons svg { width: 8px; height: 8px; fill: none; stroke: #aaa; stroke-width: 0.8; }

.menubar { display: flex; flex: none; gap: 8px; height: 13px; padding: 2px 6px 0; align-items: center; border-bottom: 1px solid #ddd; }
.menubar u { text-underline-offset: 1px; text-decoration-thickness: 1px; text-decoration-color: #999; }

.toolbar { display: flex; flex: none; align-items: center; height: 23px; padding: 1px 0 0 8px; background: linear-gradient(#fcfcfc, #f1f1f1); border-bottom: 1px solid #dcdcdc; }
.toolbar + .toolbar { padding-top: 2px; border-bottom-color: #d6ccd6; }
.tools { display: flex; align-items: center; gap: 2px; }
.tools button { display: flex; align-items: center; justify-content: center; width: 18px; height: 20px; }
.tools svg { width: 14px; height: 14px; }
.tools .active { background: #dedede; border: 1px solid #c4c4c4; }
button:disabled svg { opacity: 0.35; filter: grayscale(0.8); }
.nav-tools { justify-content: space-between; gap: 0; width: 315px; }
.wide { gap: 0; }
.tools .drop { width: 25px; justify-content: flex-start; padding-left: 2px; }
.tools.wide .drop { width: 27px; }
.drop::after { content: ""; margin-left: 4px; border: 2px solid transparent; border-top: 3px solid #333; border-bottom: 0; }
.tools .drop::after { margin-left: 3px; }
.drop:disabled::after { border-top-color: #aaa; }
.info-tools { margin-left: -2px; }
.edit-tools { justify-content: space-between; gap: 0; width: 269px; }
.label-tools { margin-left: 7px; }
.grip { flex: none; width: 3px; height: 12px; margin: 0 4px; border: 1px dotted #ccc; border-width: 0 1px; }
.rule { width: 1px; height: 15px; margin: 0 2px 0 3px; background: #ddd; }

.workspace { display: flex; flex: 1; min-height: 0; }
.docks { display: flex; flex-direction: column; flex: none; width: 177px; }
.dock { display: flex; flex-direction: column; }
.dock-title { display: flex; align-items: center; gap: 1px; height: 13px; padding: 1px 1px 0 2px; }
.dock-title h2 { flex: 1; font-size: 7px; font-weight: 400; }
.dock-title svg { width: 8px; height: 8px; }
.dock-tools { display: flex; align-items: center; gap: 5px; height: 18px; padding-left: 4px; }
.dock-tools button { display: flex; align-items: center; }
.dock-tools svg { width: 10px; height: 10px; }
.dock-tools .drop { width: 18px; }
.dock-tools .drop::after { margin-left: 3px; }
.tree-box { display: flex; height: 222px; overflow: hidden; background: #fff; border-left: 1px solid #d8d8d8; }
.tree { display: grid; grid-auto-rows: 1fr; flex: 1; height: 228px; padding: 1px 0 0 3px; list-style: none; color: #333; }
.tree li { display: flex; align-items: center; white-space: nowrap; }
.tree li::before { content: ""; width: 3px; margin-right: 4px; border: 2px solid transparent; border-left: 3px solid transparent; border-right: 0; }
.tree .branch::before { border-left-color: #444; }
.tree svg { width: 10px; height: 10px; margin-right: 3px; }
.scroll { display: flex; flex-direction: column; align-items: center; width: 10px; padding: 3px 0; background: #fafafa; }
.scroll .thumb { width: 9px; height: 12px; margin: auto 0 3px; background: #ddd; border: 1px solid #d0d0d0; }
.arrow-up { border: 3px solid transparent; border-top: 0; border-bottom: 3px solid #444; }
.arrow-down { border: 3px solid transparent; border-bottom: 0; border-top: 3px solid #444; }
.layers { flex: 1; padding-top: 3px; min-height: 0; }
.layers .dock-tools { height: 17px; }
.layer-list { flex: 1; background: #fff; border: 1px solid #d8d8d8; border-bottom: 0; }

.workspace h1 { font-size: 11px; line-height: 14px; font-weight: 700; color: #000; }
.recent { display: flex; flex-direction: column; flex: 336; margin-left: 3px; }
.recent h1 { height: 19px; padding: 2px 5px; }
.recent-list { flex: 1; background: #fff; border: 1px solid #d4d4d4; border-bottom: 0; }
.templates { display: flex; flex-direction: column; flex: 505; margin-left: 3px; }
.templates h1 { height: 22px; padding: 5px 5px; }
.template-list { flex: 1; padding: 3px 4px; background: #fff; border-top: 1px solid #d8d8d8; }
.card { display: flex; gap: 12px; padding: 3px 3px 2px; background: #efefef; border-radius: 4px; }
.preview { flex: none; width: 151px; padding: 8px; background: #fff; border-radius: 3px; }
.sheet { height: 91px; border: 1px solid #ececec; }
.card-text { padding-top: 5px; }
.card h3 { font: 700 8px/12px "Noto Sans", sans-serif; color: #000; }
.card p { margin-top: 7px; font: 7px/10px Roboto, sans-serif; }

.status { display: flex; flex: none; align-items: center; height: 18px; padding: 1px 3px 0; border-bottom: 1px solid #aaa; font-family: Roboto, "Open Sans", sans-serif; white-space: nowrap; }
.locator { display: flex; align-items: center; width: 135px; height: 14px; padding-left: 4px; background: #fff; border: 1px solid #bbb; }
.locator svg { width: 8px; height: 8px; }
.locator input { flex: 1; min-width: 0; padding: 0 0 0 4px; border: 0; outline: 0; background: none; font-family: "Open Sans", sans-serif; }
.locator input::placeholder { color: #888; opacity: 1; }
.ready { margin: 0 auto 0 4px; color: #000; }
.field { height: 13px; padding: 0 1px; border: 1px solid #c4c4c4; border-radius: 0; background: #fff; }
.coord { width: 16px; margin-left: 3px; }
.extent { margin: 0 8px 0 3px; }
.combo { position: relative; width: 48px; margin-left: 2px; }
.combo select { display: block; width: 100%; appearance: none; }
.combo::after { content: ""; position: absolute; right: 4px; top: 5px; border: 2px solid transparent; border-top: 3px solid #444; border-bottom: 0; pointer-events: none; }
.lock { margin: 0 3px 0 6px; }
.spin { display: flex; width: 50px; margin-left: 2px; }
.spin input { flex: 1; min-width: 0; padding: 0 1px; border: 0; }
.steps { display: flex; flex-direction: column; justify-content: center; gap: 2px; width: 8px; align-items: center; border-left: 1px solid #ddd; }
.steps button { border: 2px solid transparent; border-top: 0; border-bottom: 3px solid #444; }
.steps button:last-child { border-bottom: 0; border-top: 3px solid #444; }
.rot { margin-left: 5px; }
.render { display: flex; align-items: center; gap: 3px; margin-left: 4px; }
.render input { position: relative; appearance: none; width: 8px; height: 8px; background: #fff; border: 1px solid #ccc; }
.render input:checked::after { content: ""; position: absolute; left: 2px; top: 0; width: 2px; height: 4px; border: solid #111; border-width: 0 1px 1px 0; transform: rotate(40deg); }
.crs { display: flex; align-items: center; gap: 1px; margin-left: 9px; }
.messages { margin: 0 0 0 12px; }
```
